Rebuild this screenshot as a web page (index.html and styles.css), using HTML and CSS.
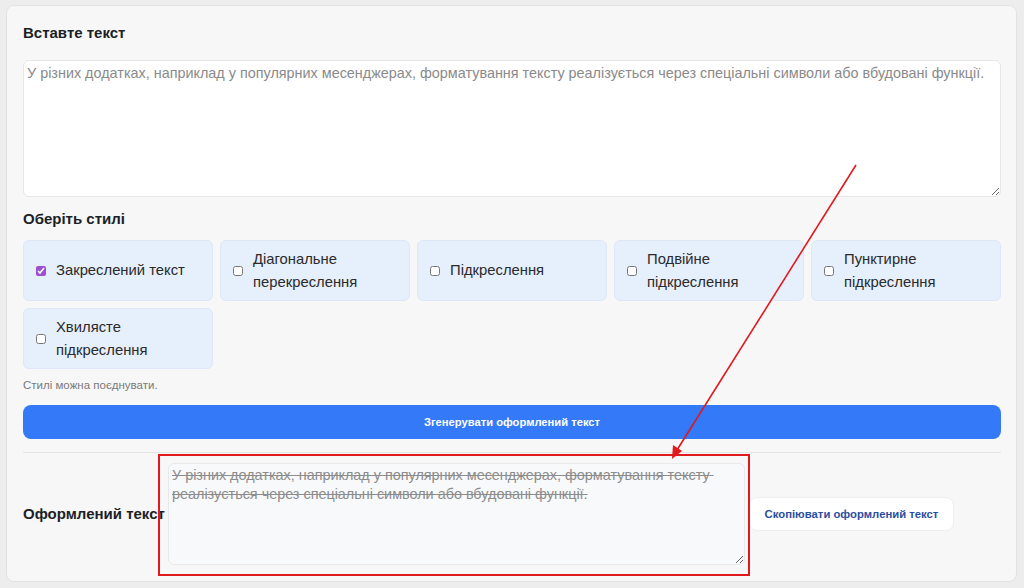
FILE: index.html
```html
<!DOCTYPE html>
<html lang="uk">
<head>
<meta charset="utf-8">
<title>Закреслений текст</title>
<link rel="stylesheet" href="styles.css">
</head>
<body>
<div class="card">
  <h2 class="title">Вставте текст</h2>
  <textarea class="input" placeholder="У різних додатках, наприклад у популярних месенджерах, форматування тексту реалізується через спеціальні символи або вбудовані функції."></textarea>

  <h2 class="title styles-title">Оберіть стилі</h2>
  <div class="styles">
    <label class="opt"><input type="checkbox" checked><span>Закреслений текст</span></label>
    <label class="opt"><input type="checkbox"><span>Діагональне перекреслення</span></label>
    <label class="opt"><input type="checkbox"><span>Підкреслення</span></label>
    <label class="opt"><input type="checkbox"><span>Подвійне підкреслення</span></label>
    <label class="opt"><input type="checkbox"><span>Пунктирне підкреслення</span></label>
    <label class="opt"><input type="checkbox"><span>Хвилясте підкреслення</span></label>
  </div>
  <p class="hint">Стилі можна поєднувати.</p>
  <button class="generate">Згенерувати оформлений текст</button>
  <hr class="divider">
  <div class="result">
    <h2 class="title result-title">Оформлений текст</h2>
    <textarea class="output" readonly>У різних додатках, наприклад у популярних месенджерах, форматування тексту реалізується через спеціальні символи або вбудовані функції.</textarea>
    <button class="copy">Скопіювати оформлений текст</button>
  </div>
</div>
<svg class="annot" width="1024" height="588" viewBox="0 0 1024 588">
  <rect x="159" y="455" width="590" height="120" fill="none" stroke="#e0191d" stroke-width="2"/>
  <line x1="856" y1="165" x2="677" y2="450" stroke="#e0191d" stroke-width="1.6"/>
  <polygon points="672,459 673,445 682,451" fill="#e0191d"/>
</svg>
</body>
</html>
```
FILE: styles.css
```css
html, body {
  margin: 0;
  padding: 0;
}
body {
  background: #ededed;
  font-family: "Liberation Sans", Arial, sans-serif;
  color: #222;
  width: 1024px;
  height: 588px;
  overflow: hidden;
  position: relative;
}
.card {
  margin: 5px 0 0 6px;
  width: 1011px;
  box-sizing: border-box;
  background: #f7f7f7;
  border: 1px solid #e2e2e2;
  border-radius: 8px;
  padding: 17px 15px 16px 16px;
}
.title {
  margin: 0;
  font-size: 15px;
  line-height: 20px;
  font-weight: bold;
  color: #1c1f26;
}
.input {
  display: block;
  margin-top: 17px;
  width: 100%;
  height: 137px;
  box-sizing: border-box;
  border: 1px solid #e6e6e6;
  border-radius: 6px;
  background: #fff;
  padding: 2px 3px;
  font-family: "Liberation Sans", Arial, sans-serif;
  font-size: 14.4px;
  line-height: 20px;
  resize: vertical;
}
.input::placeholder {
  color: #8a8a8a;
}
.styles-title {
  margin-top: 12px;
}
.styles {
  margin-top: 11px;
  display: grid;
  grid-template-columns: repeat(5, 1fr);
  gap: 7px;
}
.opt {
  display: flex;
  align-items: center;
  height: 61px;
  box-sizing: border-box;
  padding: 0 10px 0 12px;
  background: #e6effc;
  border: 1px solid #dde7f7;
  border-radius: 6px;
  font-size: 14.8px;
  line-height: 23px;
  color: #2a2a2a;
}
.opt input {
  width: 10px;
  height: 10px;
  margin: 0 10px 0 0;
  flex: none;
  accent-color: #9d4fd0;
}
.hint {
  margin: 8px 0 0;
  font-size: 11.5px;
  line-height: 16px;
  color: #7a7a7a;
}
.generate {
  display: block;
  margin-top: 12px;
  width: 100%;
  height: 34px;
  border: 0;
  border-radius: 8px;
  background: #3479f7;
  color: #fff;
  font-family: "Liberation Sans", Arial, sans-serif;
  font-size: 11.2px;
  font-weight: bold;
}
.divider {
  margin: 13px 0 0;
  border: 0;
  border-top: 1px solid #e4e4e4;
  height: 0;
}
.result {
  margin-top: 10px;
  display: flex;
  align-items: center;
}
.result-title {
  width: 145px;
  flex: none;
  white-space: nowrap;
}
.output {
  width: 577px;
  height: 102px;
  box-sizing: border-box;
  border: 1px solid #e8e9ec;
  border-radius: 6px;
  background: #f8f9fb;
  padding: 2px 3px;
  font-family: "Liberation Sans", Arial, sans-serif;
  font-size: 14.4px;
  line-height: 19px;
  color: #8c8c8c;
  text-decoration: line-through;
  resize: vertical;
}
.copy {
  margin-left: 4px;
  width: 205px;
  height: 34px;
  border: 1px solid #eceef2;
  border-radius: 8px;
  background: #fff;
  color: #2b4ea2;
  font-family: "Liberation Sans", Arial, sans-serif;
  font-size: 11.3px;
  font-weight: bold;
}
.annot {
  position: absolute;
  left: 0;
  top: 0;
  pointer-events: none;
}
```
